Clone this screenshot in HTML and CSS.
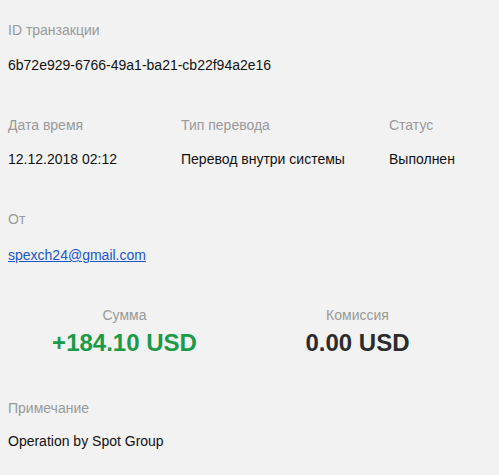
FILE: index.html
```html
<!DOCTYPE html>
<html lang="ru">
<head>
    <meta charset="UTF-8">
    <meta name="viewport" content="width=device-width, initial-scale=1.0">
    <title>Транзакция</title>
    <link rel="stylesheet" href="styles.css">
</head>
<body>
    <div class="details">
        <div class="section first">
            <div class="label">ID транзакции</div>
            <div class="value">6b72e929-6766-49a1-ba21-cb22f94a2e16</div>
        </div>

        <div class="section row">
            <div>
                <div class="label">Дата время</div>
                <div class="value">12.12.2018 02:12</div>
            </div>
            <div>
                <div class="label">Тип перевода</div>
                <div class="value">Перевод внутри системы</div>
            </div>
            <div>
                <div class="label">Статус</div>
                <div class="value">Выполнен</div>
            </div>
        </div>

        <div class="section from">
            <div class="label">От</div>
            <div class="value"><a href="mailto:spexch24@gmail.com">spexch24@gmail.com</a></div>
        </div>

        <div class="section money">
            <div class="money-col">
                <div class="label">Сумма</div>
                <div class="amount plus">+184.10 USD</div>
            </div>
            <div class="money-col">
                <div class="label">Комиссия</div>
                <div class="amount">0.00 USD</div>
            </div>
        </div>

        <div class="section note">
            <div class="label">Примечание</div>
            <div class="value">Operation by Spot Group</div>
        </div>
    </div>
</body>
</html>
```

FILE: styles.css
```css
body {
    font-family: "Liberation Sans", Arial, sans-serif;
    font-size: 14px;
    background-color: #f2f2f2;
    color: #111;
    margin: 0;
    padding: 20px 8px 14px;
}

.section {
    margin-bottom: 40px;
}

.label {
    color: #999;
    line-height: 20px;
    margin-bottom: 14px;
}

.value {
    line-height: 20px;
}

.value a {
    color: #1a55c9;
}

.first .label {
    margin-bottom: 15px;
}

.from .label {
    margin-bottom: 16px;
}

.row {
    display: grid;
    grid-template-columns: 173px 208px auto;
}

.money {
    display: grid;
    grid-template-columns: 233px 233px;
    margin-bottom: 41px;
}

.money-col {
    text-align: center;
}

.money .label {
    margin-bottom: 4px;
}

.amount {
    font-size: 24px;
    font-weight: bold;
    line-height: 28px;
    color: #2b2b2b;
}

.amount.plus {
    color: #1b9a47;
}

.note {
    margin-bottom: 0;
}

.note .label {
    margin-bottom: 13px;
}
```
